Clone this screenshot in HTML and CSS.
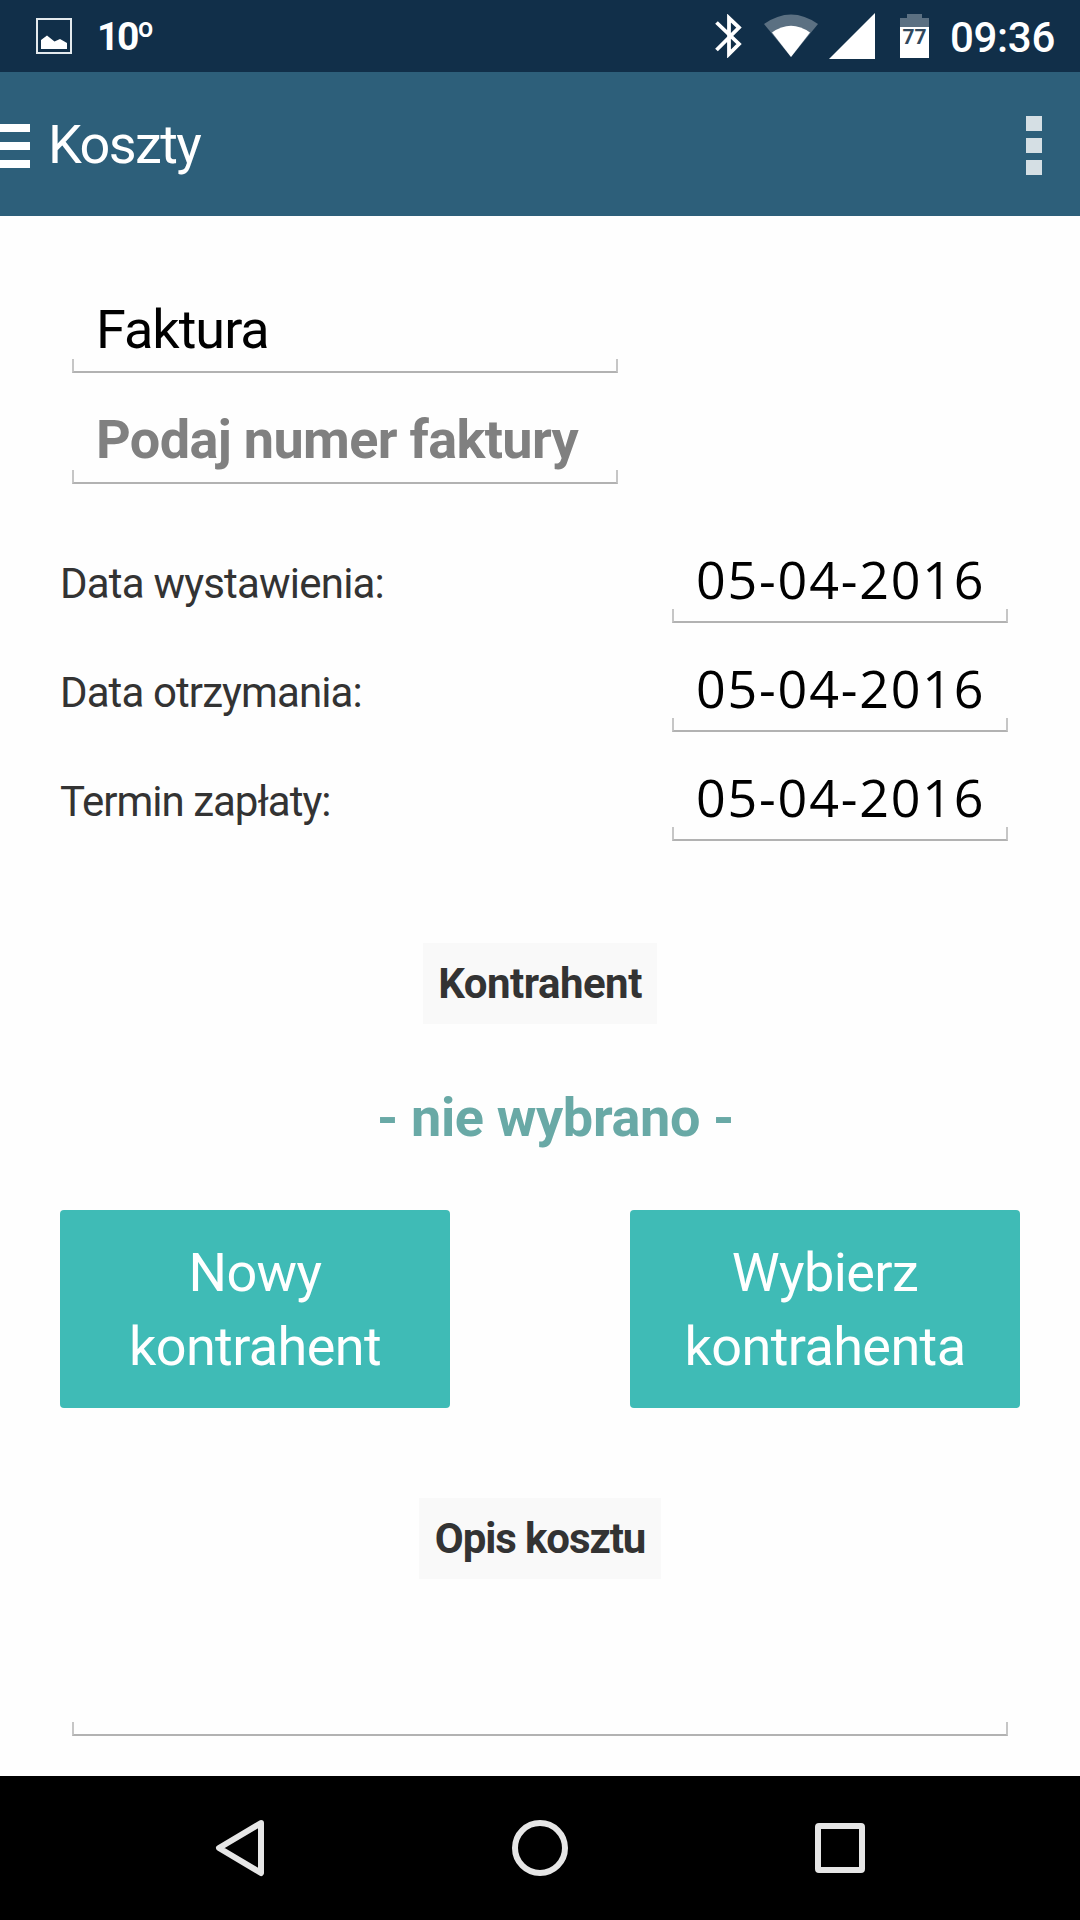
FILE: index.html
```html
<!DOCTYPE html>
<html lang="pl">
<head>
    <meta charset="UTF-8">
    <meta name="viewport" content="width=device-width, initial-scale=1.0">
    <title>Koszty</title>
    <link rel="stylesheet" href="styles.css">
</head>
<body>
    <div class="status-bar">
        <svg class="icon-image" width="36" height="36" viewBox="0 0 36 36">
            <rect x="1" y="1" width="34" height="34" fill="none" stroke="#e4eaee" stroke-width="2"/>
            <path d="M5 31V22L11 17.5L18.5 23.5L24 21L31 25V31Z" fill="#fff"/>
        </svg>
        <span class="temperature">10º</span>
        <div class="status-icons">
            <svg width="27" height="44" viewBox="0 0 27 44">
                <path d="M1.500 8.500L24 30L14 40V4L24 13.500L1.500 36" fill="none" stroke="#fff" stroke-width="3.800"/>
            </svg>
            <svg class="icon-wifi" width="54" height="44" viewBox="0 0 54 44">
                <path d="M0 10Q27 -9 54 10L27 43Z" fill="#5b7082"/>
                <path d="M8 18.500Q27 5 46 18.500L27 43Z" fill="#fff"/>
            </svg>
            <svg class="icon-signal" width="46" height="46" viewBox="0 0 46 46">
                <path d="M46 0V46H0Z" fill="#fff"/>
            </svg>
            <svg class="icon-battery" width="29" height="44" viewBox="0 0 29 44">
                <path d="M0 4H7V0H22V4H29V13H0Z" fill="#5b7082"/>
                <rect y="13" width="29" height="31" fill="#fff"/>
                <text class="battery-level" x="14.500" y="30" text-anchor="middle">77</text>
            </svg>
            <span class="clock">09:36</span>
        </div>
    </div>

    <div class="header">
        <div class="menu-icon"><i></i><i></i><i></i></div>
        <div class="title">Koszty</div>
        <div class="more-icon"><i></i><i></i><i></i></div>
    </div>

    <div class="content">
        <div class="field field-type"><span class="type-value">Faktura</span></div>
        <div class="field field-number"><span class="placeholder">Podaj numer faktury</span></div>

        <div class="dates">
            <div class="row">
                <span class="label label-issued">Data wystawienia:</span>
                <div class="field field-date">05-04-2016</div>
            </div>
            <div class="row">
                <span class="label label-received">Data otrzymania:</span>
                <div class="field field-date">05-04-2016</div>
            </div>
            <div class="row">
                <span class="label label-due">Termin zapłaty:</span>
                <div class="field field-date">05-04-2016</div>
            </div>
        </div>

        <div class="section-title section-contractor">Kontrahent</div>
        <div class="selected">- nie wybrano -</div>
        <div class="buttons">
            <div class="button">Nowy<br>kontrahent</div>
            <div class="button">Wybierz<br>kontrahenta</div>
        </div>

        <div class="section-title section-description">Opis kosztu</div>
        <div class="field field-description"></div>
    </div>

    <div class="nav-bar">
        <svg width="56" height="60" viewBox="0 0 56 60">
            <path d="M49 5L7 30L49 55Z" fill="none" stroke="#e6e6e6" stroke-width="6" stroke-linejoin="round"/>
        </svg>
        <svg width="60" height="60" viewBox="0 0 60 60">
            <circle cx="30" cy="30" r="25" fill="none" stroke="#e6e6e6" stroke-width="6"/>
        </svg>
        <svg width="56" height="60" viewBox="0 0 56 60">
            <rect x="6" y="8" width="44" height="44" rx="1" fill="none" stroke="#e6e6e6" stroke-width="6"/>
        </svg>
    </div>
</body>
</html>
```

FILE: styles.css
```css
* {
    box-sizing: border-box;
}

body {
    display: flex;
    flex-direction: column;
    width: 1080px;
    height: 1920px;
    margin: 0;
    overflow: hidden;
    background-color: #fefefe;
    font-family: "Roboto", "Open Sans", sans-serif;
}

svg {
    display: block;
}

.status-bar {
    display: flex;
    align-items: center;
    height: 72px;
    padding: 0 25px 0 36px;
    background-color: #112f49;
    color: #fff;
}

.temperature {
    margin-left: 25px;
    padding-top: 1px;
    font-size: 39px;
    font-weight: 700;
    letter-spacing: -2.5px;
}

.status-icons {
    display: flex;
    align-items: center;
    margin-left: auto;
}

.icon-wifi {
    margin-left: 22px;
}

.icon-signal {
    margin-left: 11px;
}

.icon-battery {
    margin-left: 25px;
}

.battery-level {
    font-size: 21px;
    font-weight: 700;
    fill: #31485c;
}

.clock {
    margin-left: 21px;
    padding-top: 3px;
    font-size: 42px;
    font-weight: 500;
    line-height: 69px;
    letter-spacing: -0.3px;
}

.header {
    display: flex;
    align-items: center;
    height: 144px;
    padding: 4px 38px 0 0;
    background-color: #2d5f7a;
    color: #fff;
}

.menu-icon {
    display: grid;
    gap: 10px;
}

.menu-icon i {
    width: 30px;
    height: 8px;
    background-color: #fff;
}

.title {
    margin-left: 18px;
    padding-bottom: 4px;
    font-size: 54px;
    letter-spacing: -1.6px;
}

.more-icon {
    display: grid;
    gap: 7px;
    margin-left: auto;
    padding-bottom: 1px;
}

.more-icon i {
    width: 16px;
    height: 15px;
    background-color: #d5dfe4;
}

.content {
    height: 1560px;
    padding: 77px 60px 0;
}

.field {
    position: relative;
    height: 80px;
    margin: 0 12px;
    padding: 0 24px;
    color: #000;
    font-size: 54px;
    line-height: 72px;
    white-space: nowrap;
}

/* thin underline with short ticks at both ends */
.field::after {
    content: "";
    position: absolute;
    left: 0;
    right: 0;
    bottom: 0;
    height: 12px;
    border: 2px solid #c6c6c6;
    border-top: none;
    border-bottom-color: #b2b2b2;
}

.field-type,
.field-number {
    width: 546px;
}

.field-type {
    line-height: 74px;
    letter-spacing: -1px;
}

.field-number {
    margin-top: 31px;
    color: #808080;
    font-weight: 700;
    letter-spacing: -0.65px;
}

.dates {
    display: grid;
    gap: 29px;
    margin-top: 59px;
}

.row {
    display: flex;
    align-items: center;
    justify-content: space-between;
}

.label {
    color: #333;
    font-size: 42px;
}

.label-issued {
    letter-spacing: -0.8px;
}

.label-received {
    letter-spacing: -0.9px;
}

.label-due {
    letter-spacing: -1px;
}

.field-date {
    width: 336px;
    font-family: "Open Sans", sans-serif;
    font-size: 52px;
    line-height: 71px;
    letter-spacing: 1.8px;
}

.section-title {
    width: 234px;
    height: 81px;
    margin: 102px auto 0;
    background-color: #f9f9f9;
    color: #333;
    font-size: 42px;
    font-weight: 700;
    line-height: 82px;
    text-align: center;
    letter-spacing: -0.5px;
}

.selected {
    margin-top: 57px;
    padding-left: 31px;
    color: #69a9a6;
    font-size: 54px;
    font-weight: 700;
    line-height: 74px;
    text-align: center;
    letter-spacing: -0.35px;
}

.buttons {
    display: flex;
    justify-content: space-between;
    margin-top: 55px;
}

.button {
    width: 390px;
    height: 198px;
    padding-top: 26px;
    border-radius: 4px;
    background-color: #3fbbb6;
    color: #fff;
    font-size: 54px;
    line-height: 74px;
    text-align: center;
    letter-spacing: -0.6px;
}

.section-description {
    width: 242px;
    margin-top: 90px;
    letter-spacing: -1.1px;
}

.field-description {
    margin-top: 77px;
}

.nav-bar {
    display: flex;
    align-items: center;
    justify-content: space-between;
    height: 144px;
    padding: 0 212px;
    background-color: #000;
}
```
